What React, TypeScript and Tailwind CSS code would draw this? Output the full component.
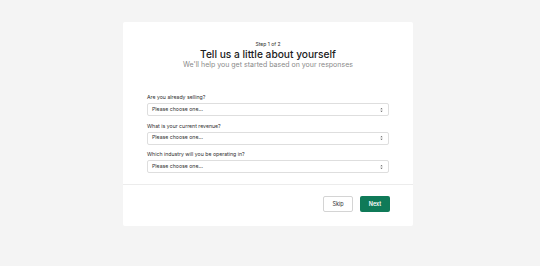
import React from "react";

function Field({ label }: { label: string }) {
  return (
    <div className="flex flex-col">
      <div className="text-[5.2px] leading-[8px] text-[#303030] mb-[2px]">{label}</div>
      <div className="h-[13px] border border-[#dedede] rounded-[2px] bg-white flex items-center justify-between pl-[4px] pr-[5px]">
        <span className="text-[5.2px] text-[#303030]">Please choose one...</span>
        <svg width="3" height="6" viewBox="0 0 3 6">
          <path d="M0.3 2.3 L1.5 1 L2.7 2.3 Z" fill="#555" />
          <path d="M0.3 3.7 L1.5 5 L2.7 3.7 Z" fill="#555" />
        </svg>
      </div>
    </div>
  );
}

export default function App() {
  return (
    <div className="w-[540px] h-[266px] bg-[#f4f4f4] pt-[22px]" style={{ fontFamily: "Inter, 'Noto Sans', sans-serif" }}>
      <div className="ml-[123px] w-[290px] h-[204px] bg-white rounded-[2px] flex flex-col">
        <div className="flex flex-col items-center pt-[19px]">
          <div className="text-[5px] leading-[7px] text-[#303030]">Step 1 of 2</div>
          <div className="text-[10.2px] leading-[12px] font-medium text-[#202020]">Tell us a little about yourself</div>
          <div className="text-[7px] leading-[9px] text-[#8a8a8a]">We'll help you get started based on your responses</div>
        </div>
        <div className="flex flex-col gap-[5.5px] px-[24px] pt-[24px]">
          <Field label="Are you already selling?" />
          <Field label="What is your current revenue?" />
          <Field label="Which industry will you be operating in?" />
        </div>
        <div className="mt-[11px] border-t border-[#ececec]" />
        <div className="flex justify-end gap-[7px] pr-[23px] pt-[11px]">
          <button className="w-[30px] h-[16px] border border-[#d4d4d4] rounded-[2px] bg-white text-[5.5px] text-[#303030]">Skip</button>
          <button className="w-[30px] h-[16px] rounded-[2px] bg-[#0f7a58] text-[5.5px] font-semibold text-white">Next</button>
        </div>
      </div>
    </div>
  );
}
